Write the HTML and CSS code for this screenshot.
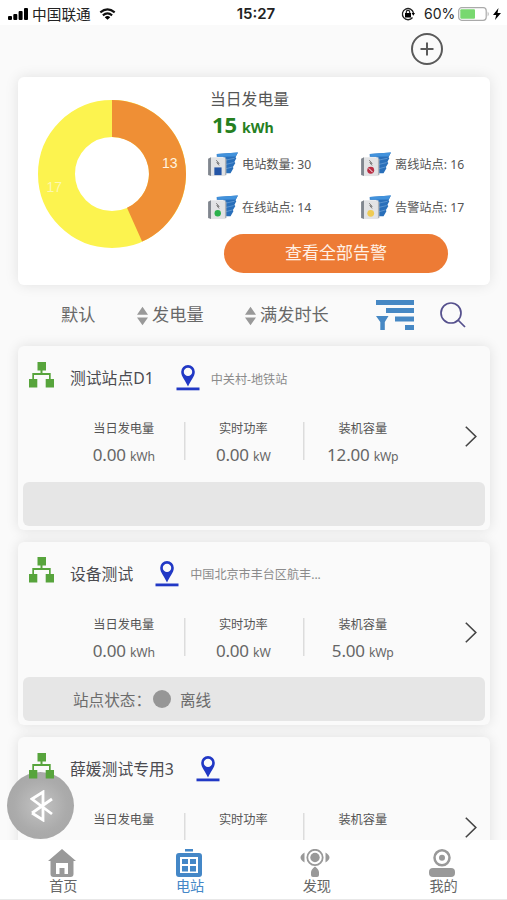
FILE: index.html
```html
<!DOCTYPE html>
<html lang="zh-CN">
<head>
<meta charset="utf-8">
<title>电站</title>
<link rel="stylesheet" href="styles.css">
</head>
<body>
<svg class="defs" aria-hidden="true">
  <symbol id="tree" viewBox="0 0 25 26"><path d="M8.500 0h8.500v8.500h-3.500v2.500h8.200v6H25v8.500h-8.300V17h3.300V13H5v4h3.300v8.500H0V17h3.300v-6h8.200V8.500h-3z"/></symbol>
  <symbol id="pin" viewBox="0 0 24 26"><path fill-rule="evenodd" d="M12 0a6.800 6.800 0 0 0-6.800 6.900C5.200 11.500 9.500 15.500 12 21.500 14.500 15.500 18.800 11.500 18.800 6.900A6.800 6.800 0 0 0 12 0zm0 2.700a4.200 4.200 0 1 1 0 8.400 4.200 4.200 0 0 1 0-8.400z"/><path d="M.5 22.500h23V25.300H.5z"/></symbol>
  <symbol id="plant" viewBox="0 0 32 27"><path fill="#296fba" d="m9 2 22-1.500-2.500 5 .8 1-2 4 1 1-2.500 4 .5 1.500-3 5H16V5H9z"/><path fill="#4292dc" d="m9 2 22-1.500-2.500 4.300L10 5z"/><path fill="none" stroke="#8fbbe6" stroke-width=".5" d="m18 8.500 9.500-2M18 13l8.500-2M18 17.500l7.500-2"/><path fill="#e2e3e5" d="M2.500 5.500H18V25H2.500z"/><path fill="#80868e" d="M0 7l3-1.500V25l-3-1z"/><path fill="#aeb2b7" d="M17.500 7H19v17h-1.500z"/><path fill="none" stroke="#777" d="m8.500 8.500 3 3.500-2.500-1 2.500 3"/></symbol>
  <symbol id="sort" viewBox="0 0 12 20"><path d="m6 0 6 8.500H0zM0 11.500h12L6 20z"/></symbol>
  <symbol id="next" viewBox="0 0 12 21"><path fill="none" stroke="#444" stroke-width="1.600" d="m.8.800 10 9.700-10 9.700"/></symbol>
</svg>
<div class="status">
  <svg class="signal" viewBox="0 0 20 12"><rect y="8" width="4" height="4" rx="1"/><rect x="5.300" y="6" width="4" height="6" rx="1"/><rect x="10.600" y="3" width="4" height="9" rx="1"/><rect x="16" width="4" height="12" rx="1"/></svg>
  <span class="carrier">中国联通</span>
  <svg class="wifi" viewBox="0 0 18 13"><g fill="none" stroke="#111" stroke-width="2.300"><path d="M1.200 4.700q7.800-6.600 15.600 0M4 8q5-4.200 10 0"/></g><path d="M6 10q3-2.400 6 0l-3 2.800z"/></svg>
  <span class="clock">15:27</span>
  <svg class="lock" viewBox="0 0 14 14"><path fill="none" stroke="#222" stroke-width="1.300" d="M11.500 10.500A5.600 5.600 0 1 1 12.500 6"/><path d="M10.600 6h3.400l-1.700 2.800zM4 6h6v4.500H4z"/><path fill="none" stroke="#222" stroke-width="1.200" d="M5.300 6V5a1.700 1.700 0 0 1 3.400 0v1"/></svg>
  <span class="percent">60%</span>
  <svg class="battery" viewBox="0 0 32 14"><rect x=".7" y=".7" width="27.500" height="12.600" rx="3" fill="#fff" stroke="#aaa" stroke-width="1.200"/><rect x="2.300" y="2.300" width="14.700" height="9.400" rx="1" fill="#78d86f"/><path fill="#aaa" d="M29.700 4.500q2 2.500 0 5z"/></svg>
  <svg class="bolt" viewBox="0 0 8 12"><path d="M5.500 0 0 7h3.200L2 12l6-7H4.500z"/></svg>
</div>
<header class="top">
  <svg class="add" viewBox="0 0 34 34"><g fill="none" stroke="#5a5a5a" stroke-width="2"><circle cx="17" cy="17" r="15"/><path d="M10.500 17h13M17 10.500v13"/></g></svg>
</header>
<section class="summary">
  <svg class="donut" viewBox="0 0 148 148">
    <circle cx="74" cy="74" r="55.500" fill="none" stroke="#fcf34f" stroke-width="37"/>
    <path fill="#ef8f35" d="M74 0A74 74 0 0 1 104.100 141.600L89 107.800A37 37 0 0 0 74 37z"/>
    <text x="124" y="67.500">13</text><text class="pale" x="8.500" y="92">17</text>
  </svg>
  <div class="overview">
    <div class="overview-title">当日发电量</div>
    <div class="today">15 <small>kWh</small></div>
    <div class="stats">
      <div class="stat"><svg viewBox="0 0 32 27"><use href="#plant"/><path fill="#2455a6" d="M6.500 16h7.500v8H6.500z"/></svg><span>电站数量: 30</span></div>
      <div class="stat"><svg viewBox="0 0 32 27"><use href="#plant"/><circle cx="10" cy="19" r="3.600" fill="#b92d43"/><path stroke="#fff" d="m8 17 4 4"/></svg><span>离线站点: 16</span></div>
      <div class="stat"><svg viewBox="0 0 32 27"><use href="#plant"/><circle cx="10" cy="19" r="3.300" fill="#2bb14c"/></svg><span>在线站点: 14</span></div>
      <div class="stat"><svg viewBox="0 0 32 27"><use href="#plant"/><circle cx="10" cy="19" r="3.500" fill="#efcb53"/></svg><span>告警站点: 17</span></div>
    </div>
    <div class="alarm">查看全部告警</div>
  </div>
</section>
<nav class="filters">
  <span class="by-default">默认</span>
  <span class="by-power"><svg class="sort"><use href="#sort"/></svg>发电量</span>
  <span class="by-hours"><svg class="sort"><use href="#sort"/></svg>满发时长</span>
  <svg class="funnel" viewBox="0 0 38 30"><path d="M0 0h38v5H0zM10 8h28v5H10zM19 16.500h19v5H19zM29 25h9v5h-9zM0 16h12.500L8.800 22v8H4.300v-8z"/></svg>
  <svg class="search" viewBox="0 0 26 26"><g fill="none" stroke="#55508d" stroke-width="1.700"><circle cx="11" cy="11" r="10"/><path d="m18 18 7 7"/></g></svg>
</nav>
<main class="list">
  <article class="card">
    <div class="head"><svg class="tree"><use href="#tree"/></svg><span class="name">测试站点D1</span><svg class="pin"><use href="#pin"/></svg><span class="place">中关村-地铁站</span></div>
    <div class="metrics">
      <div class="metric"><span>当日发电量</span><b>0.00 <small>kWh</small></b></div>
      <div class="metric"><span>实时功率</span><b>0.00 <small>kW</small></b></div>
      <div class="metric"><span>装机容量</span><b>12.00 <small>kWp</small></b></div>
      <svg class="next"><use href="#next"/></svg>
    </div>
    <div class="state"></div>
  </article>
  <article class="card">
    <div class="head"><svg class="tree"><use href="#tree"/></svg><span class="name">设备测试</span><svg class="pin"><use href="#pin"/></svg><span class="place">中国北京市丰台区航丰...</span></div>
    <div class="metrics">
      <div class="metric"><span>当日发电量</span><b>0.00 <small>kWh</small></b></div>
      <div class="metric"><span>实时功率</span><b>0.00 <small>kW</small></b></div>
      <div class="metric"><span>装机容量</span><b>5.00 <small>kWp</small></b></div>
      <svg class="next"><use href="#next"/></svg>
    </div>
    <div class="state"><span class="state-label">站点状态：</span><i class="dot"></i><span>离线</span></div>
  </article>
  <article class="card">
    <div class="head"><svg class="tree"><use href="#tree"/></svg><span class="name">薛媛测试专用3</span><svg class="pin"><use href="#pin"/></svg></div>
    <div class="metrics">
      <div class="metric"><span>当日发电量</span></div>
      <div class="metric"><span>实时功率</span></div>
      <div class="metric"><span>装机容量</span></div>
      <svg class="next"><use href="#next"/></svg>
    </div>
  </article>
</main>
<div class="bluetooth"><svg viewBox="0 0 24 32"><path fill="none" stroke="#fff" stroke-width="2.800" d="M22 9 2 23M22 24 2 9l11-7v28L2 23"/></svg></div>
<footer class="tabs">
  <div class="tab"><svg viewBox="0 0 28 28"><path fill-rule="evenodd" d="M14 0 28 12h-2.500v13a3 3 0 0 1-3 3h-17a3 3 0 0 1-3-3V12H0zM8 14v11h3.500v-6h5v6H20V14z"/></svg><span>首页</span></div>
  <div class="tab active"><svg viewBox="0 0 28 28"><path fill-rule="evenodd" d="M10 0h8v2.500h-8zM4 4h20a3 3 0 0 1 3 3v18a3 3 0 0 1-3 3H4a3 3 0 0 1-3-3V7a3 3 0 0 1 3-3zm1 4v16h18V8z"/><path d="M7 10h6v5H7zM15 10h6v5h-6zM7 17h6v5.500H7zM15 17h6v5.500h-6z"/></svg><span>电站</span></div>
  <div class="tab"><svg class="wide" viewBox="0 0 30 28"><circle cx="15" cy="8.500" r="7.700" fill="none" stroke="#999" stroke-width="1.800"/><circle cx="15" cy="8.500" r="4.700"/><path d="M4.500 3.500v10Q-3.500 8.500 4.500 3.500zM25.500 3.500v10q8-5 0-10zM15 17.500q4 3 4 6v2.500a2 2 0 0 1-2 2h-4a2 2 0 0 1-2-2v-2.500q0-3 4-6z"/></svg><span>发现</span></div>
  <div class="tab"><svg viewBox="0 0 28 28"><circle cx="14" cy="8.800" r="7.500" fill="none" stroke="#999" stroke-width="2.500"/><circle cx="14" cy="8.800" r="3"/><rect x="1" y="19" width="26" height="9" rx="4"/></svg><span>我的</span></div>
</footer>
</body>
</html>
```
FILE: styles.css
```css
* { box-sizing: border-box; }
body {
  margin: 0;
  width: 507px;
  height: 900px;
  overflow: hidden;
  display: flex;
  flex-direction: column;
  position: relative;
  background: #fafafa;
  color: #555;
  font-family: "Noto Sans", "Noto Sans CJK SC", sans-serif;
  white-space: nowrap;
}
svg { display: block; flex: none; }
.defs { position: absolute; width: 0; height: 0; }

.status {
  height: 25px;
  flex: none;
  display: flex;
  align-items: center;
  padding: 2px 5px 0 8px;
  background: #fff;
  color: #222;
  font-size: 14.7px;
  line-height: 20px;
}
.signal { width: 20px; height: 12px; margin-right: 4px; }
.carrier { width: 67px; }
.wifi { width: 17px; height: 12px; }
.clock { width: 120px; margin-left: 80px; text-align: center; font: 600 15px/20px Inter, sans-serif; }
.lock { width: 14px; height: 14px; margin-left: 85px; margin-right: 9px; }
.percent { width: 34px; font: 14px/20px Inter, sans-serif; }
.battery { width: 32px; height: 14px; margin-right: 3px; }
.bolt { width: 8px; height: 12px; }

.top { height: 52px; flex: none; padding: 7px 0 0 410px; }
.add { width: 34px; height: 34px; }

.summary {
  margin: 0 17px 0 18px;
  height: 208px;
  flex: none;
  display: flex;
  background: #fff;
  border-radius: 6px;
  box-shadow: 0 0 14px rgba(0, 0, 0, .1);
}
.donut { width: 148px; height: 148px; margin: 23px 22px 0 20px; }
.donut text { fill: #fff3df; font: 14px "Liberation Sans", sans-serif; }
.donut .pale { fill: #fdf8b0; }
.overview { padding-top: 12px; }
.overview-title { margin-left: 2px; font-size: 15.800px; line-height: 20px; }
.today { margin-left: 4px; color: #26801f; font-size: 22px; font-weight: 700; line-height: 31px; height: 31px; }
.today small { font-size: 14.200px; margin-left: -1px; }
.stats { display: grid; grid-template-columns: 153px 110px; grid-auto-rows: 43px; margin-top: 2px; }
.stat { display: flex; align-items: center; gap: 3px; font-size: 12.200px; height: 43px; }
.stat svg { width: 31px; height: 26px; margin-top: 3px; }
.alarm {
  width: 224px;
  height: 39px;
  margin: 6px 0 0 16px;
  border-radius: 20px;
  background: #ed7b35;
  color: #fff0e4;
  text-align: center;
  font-size: 17px;
  line-height: 38px;
}

.filters { height: 61px; flex: none; display: flex; align-items: center; padding: 0 0 2px 61px; font-size: 17.200px; line-height: 24px; color: #686868; }
.by-default { width: 76px; }
.by-power, .by-hours { display: flex; align-items: center; gap: 4px; width: 108px; }
.by-hours { width: 131px; }
.sort { width: 11px; height: 20px; fill: #999; margin-top: 3px; }
.funnel { width: 38px; height: 30px; fill: #4688c4; }
.search { width: 26px; height: 26px; margin-left: 26px; }

.list { height: 494px; flex: none; padding: 0 17px 0 18px; display: flex; flex-direction: column; gap: 12px; }
.card { height: 183.500px; flex: none; padding: 14px 5px 4px; border-radius: 6px; background: #fafafa; box-shadow: 0 0 13px rgba(0, 0, 0, .11); }
.head { display: flex; align-items: center; height: 36px; padding-left: 6px; }
.tree { width: 25px; height: 26px; margin: -7px 16px 0 0; fill: #57a43c; position: relative; z-index: 3; }
.name { font-size: 15.800px; color: #4b4b50; margin-top: -1px; }
.pin { width: 24px; height: 26px; margin: 0 11px 0 22px; fill: #2138c5; }
.place { font-size: 12.100px; color: #8b8b8b; margin-top: 1px; }
.metrics { display: flex; height: 85.500px; padding: 21px 0 0 41px; }
.metric { width: 119.500px; height: 60px; display: flex; flex-direction: column; align-items: center; }
.metric span { font-size: 12.200px; line-height: 24px; }
.metric b { font-size: 17px; font-weight: 400; line-height: 28px; color: #666; letter-spacing: -.2px; }
.metric small { font-size: 12.200px; }
.metric + .metric { background: linear-gradient(#dcdcdc, #dcdcdc) 0 5px / 1.500px 38px no-repeat; }
.next { width: 12px; height: 21px; margin: 9px 0 0 42px; }
.state { height: 44px; display: flex; align-items: center; padding: 0 0 0 50px; border-radius: 6px; background: #e6e6e6; color: #6c6c6c; font-size: 15.600px; }
.state-label { width: 80px; }
.dot { width: 18px; height: 18px; margin-right: 9px; border-radius: 50%; background: #969696; }

.bluetooth { position: absolute; z-index: 2; left: 7px; top: 772px; width: 67px; height: 67px; border-radius: 50%; background: radial-gradient(#c3c3c3, #ababab 55%, #a3a3a3); display: grid; place-items: center; }
.bluetooth svg { width: 24px; height: 32px; margin-left: 2px; }

.tabs { height: 60px; flex: none; display: grid; grid-template-columns: repeat(4, 1fr); background: #fff; border-bottom: 1px solid #e8e8e8; position: relative; z-index: 4; }
.tab { display: flex; flex-direction: column; align-items: center; padding-top: 9px; fill: #999; font-size: 14.200px; line-height: 18px; color: #666; }
.tab svg { width: 28px; height: 28px; margin-right: 3px; }
.tab .wide { width: 30px; margin-right: 4px; }
.tab.active { fill: #4487c7; color: #4487c7; }
```
